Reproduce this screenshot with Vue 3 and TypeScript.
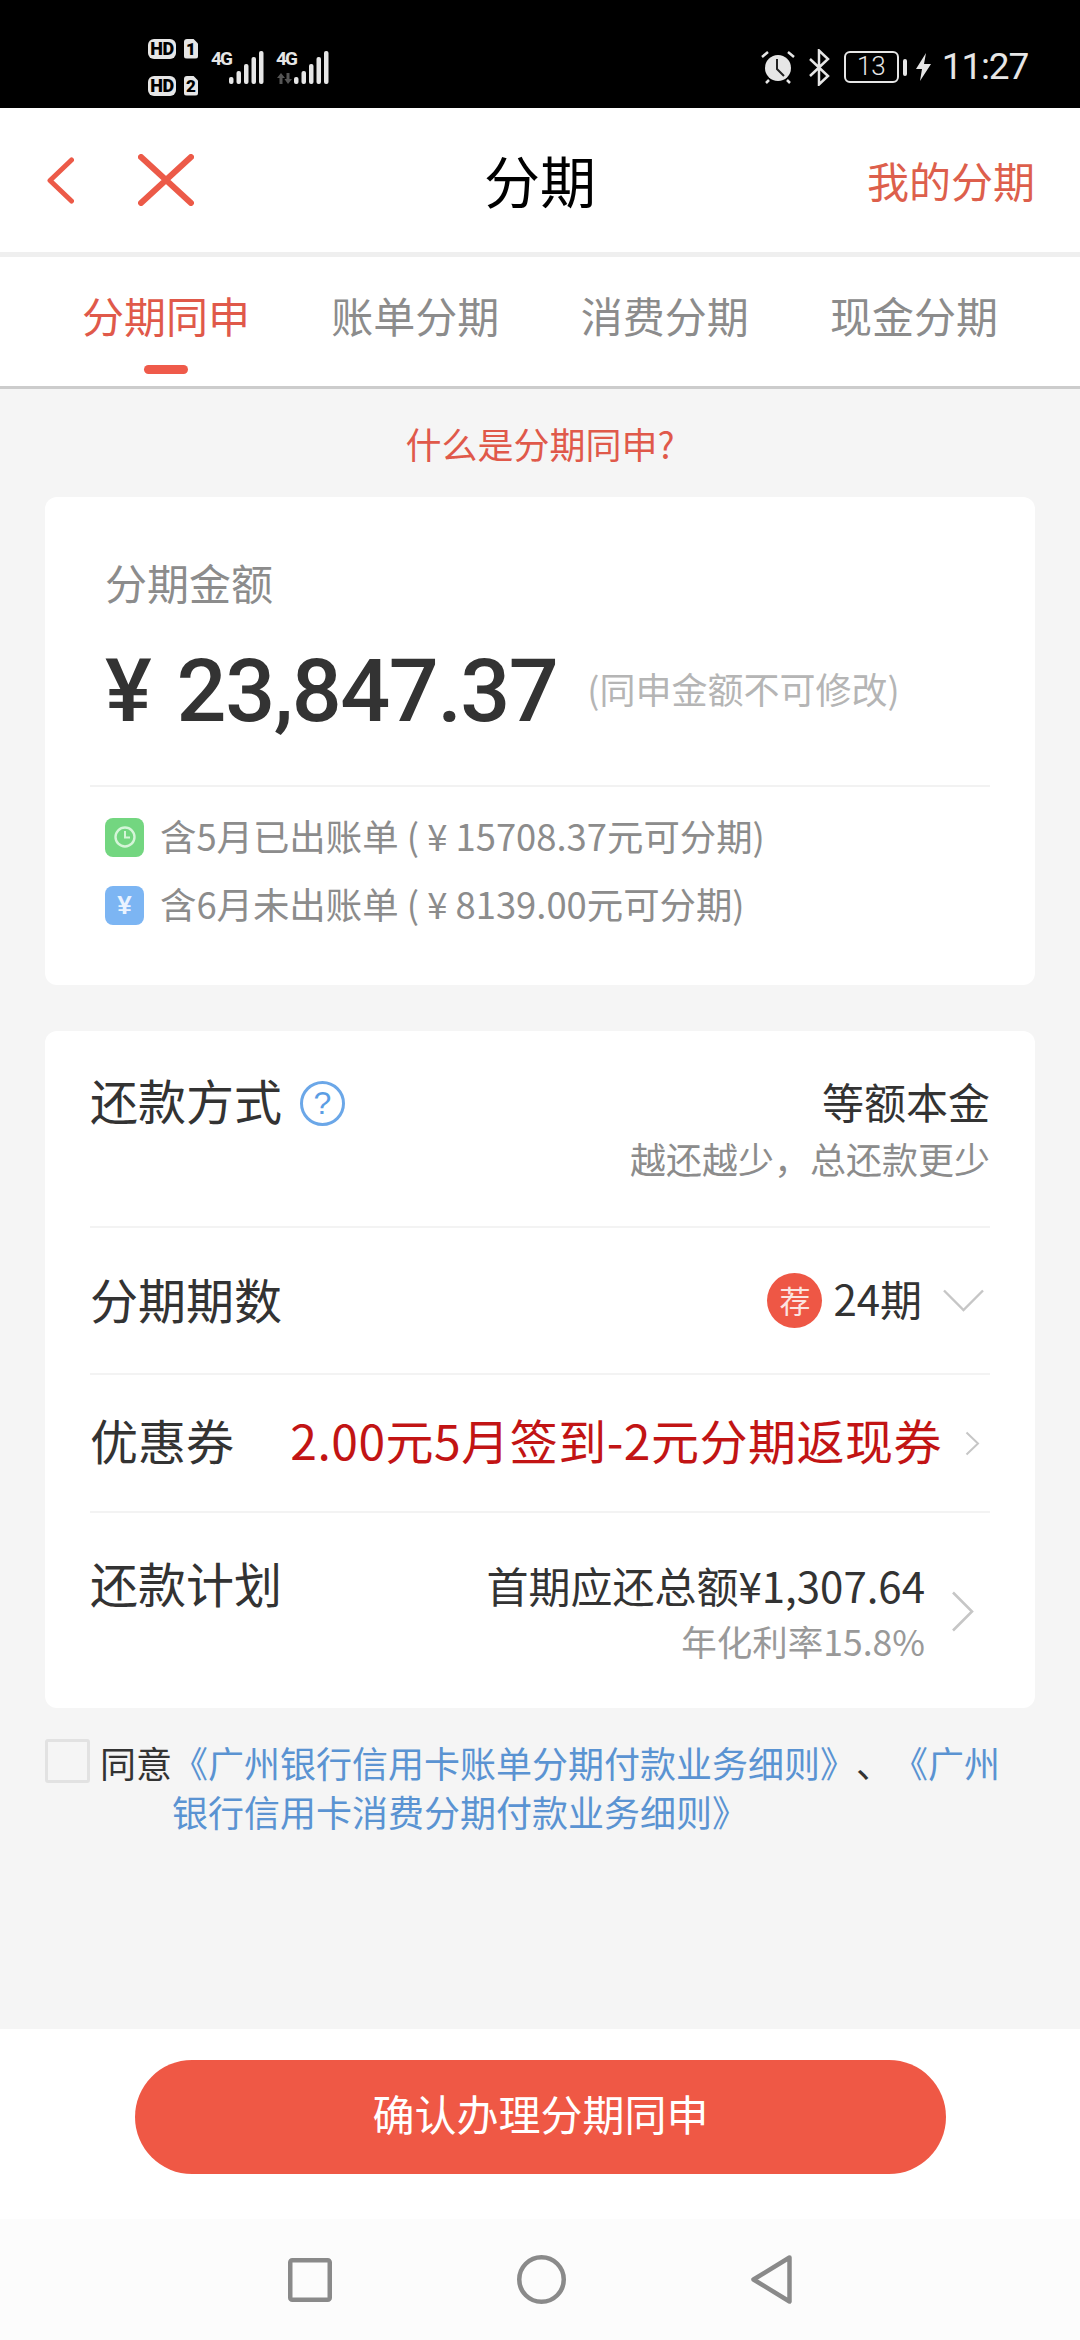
<script setup lang="ts">
const tabs = ['分期同申', '账单分期', '消费分期', '现金分期']
const bars = [
  { x: 0, h: 7 },
  { x: 7.5, h: 13 },
  { x: 15, h: 20 },
  { x: 22.5, h: 27 },
  { x: 30, h: 33 },
]
</script>

<template>
  <div class="page">
    <div class="status">
      <div class="status-left">
        <div class="sims">
          <div class="sim"><span class="hd">HD</span><span class="num">1</span></div>
          <div class="sim"><span class="hd">HD</span><span class="num">2</span></div>
        </div>
        <div class="net" v-for="n in 2" :key="n">
          <div class="net-type">
            <span class="g4">4G</span>
            <svg v-if="n === 2" width="17" height="11" viewBox="0 0 17 11" fill="#555">
              <path d="M5 0l4 5H6.500v6h-3V5H1zM12 11L8.500 6H10.500V0h3v6H16z" />
            </svg>
          </div>
          <svg width="35" height="33" viewBox="0 0 35 33" fill="#e6e6e6">
            <rect v-for="b in bars" :key="b.x" :x="b.x" :y="33 - b.h" width="4.500" :height="b.h" rx="2" />
          </svg>
        </div>
      </div>
      <div class="status-right">
        <svg class="alarm" width="34" height="34" viewBox="0 0 34 34">
          <circle cx="17" cy="18" r="13" fill="#e6e6e6" />
          <path d="M16 9v10l7 7" fill="none" stroke="#222" stroke-width="2" />
          <path d="M1 7l6-5M33 7l-6-5M5 33l3-3M29 33l-3-3" stroke="#e6e6e6" stroke-width="2.500" />
        </svg>
        <svg class="bt" width="22" height="37" viewBox="0 0 22 37" fill="none" stroke="#e6e6e6" stroke-width="2.500">
          <path d="M2 10l18 17-9 8.500V1.500l9 8.500L2 27" />
        </svg>
        <div class="batt">13</div>
        <span class="batt-tip"></span>
        <svg class="bolt" width="15" height="28" viewBox="0 0 15 28" fill="#e6e6e6"><path d="M10 0L0 16h6l-2 12 11-17H8z" /></svg>
        <span class="clock">11:27</span>
      </div>
    </div>

    <header class="nav">
      <div class="nav-icons">
        <svg width="27" height="47" viewBox="0 0 27 47" fill="none" stroke="#ec5a48" stroke-width="5" stroke-linecap="round" stroke-linejoin="round">
          <path d="M24.500 3L3 23.500 24.500 44" />
        </svg>
        <svg width="56" height="52" viewBox="0 0 56 52" fill="none" stroke="#ec5a48" stroke-width="6" stroke-linecap="round">
          <path d="M3 3l50 46M53 3L3 49" />
        </svg>
      </div>
      <div class="nav-title">分期</div>
      <div class="nav-mine">我的分期</div>
    </header>
    <div class="nav-gap"></div>

    <div class="tabs">
      <div v-for="(t, i) in tabs" :key="t" class="tab" :class="{ on: i === 0 }">
        {{ t }}
        <i v-if="i === 0"></i>
      </div>
    </div>

    <main class="body">
      <div class="what">什么是分期同申?</div>

      <section class="card amount">
        <div class="amt-label">分期金额</div>
        <div class="amt-row">
          <span class="amt-num">¥ 23,847.37</span>
          <span class="amt-note">(同申金额不可修改)</span>
        </div>
        <div class="bills">
          <div class="bill">
            <span class="badge green">
              <svg width="26" height="26" viewBox="0 0 26 26" fill="none" stroke="#d5f5d8" stroke-width="2.400">
                <circle cx="13" cy="13" r="9.500" />
                <path d="M13 7v6.500h5" stroke-width="2" />
              </svg>
            </span>
            <span class="bill-text">含5月已出账单 ( ¥ 15708.37元可分期)</span>
          </div>
          <div class="bill">
            <span class="badge blue">¥</span>
            <span class="bill-text">含6月未出账单 ( ¥ 8139.00元可分期)</span>
          </div>
        </div>
      </section>

      <section class="card form">
        <div class="row repay">
          <div class="row-label">
            还款方式
            <span class="help">?</span>
          </div>
          <div class="repay-right">
            <div class="val">等额本金</div>
            <div class="sub">越还越少，总还款更少</div>
          </div>
        </div>
        <div class="row terms">
          <div class="row-label">分期期数</div>
          <div class="terms-right">
            <span class="rec">荐</span>
            <span class="val">24期</span>
            <svg width="41" height="23" viewBox="0 0 41 23" fill="none" stroke="#c6c6c6" stroke-width="2.400">
              <path d="M1 1.500l19.500 19.500L40 1.500" />
            </svg>
          </div>
        </div>
        <div class="row coupon">
          <div class="row-label">优惠券</div>
          <div class="coupon-right">
            <span class="coupon-text">2.00元5月签到-2元分期返现券</span>
            <svg width="15" height="25" viewBox="0 0 15 25" fill="none" stroke="#c6c6c6" stroke-width="2">
              <path d="M1.500 1.500l11.500 11-11.500 11" />
            </svg>
          </div>
        </div>
        <div class="row plan">
          <div class="row-label">还款计划</div>
          <div class="plan-right">
            <div class="plan-text">
              <div class="plan-val">首期应还总额¥1,307.64</div>
              <div class="sub">年化利率15.8%</div>
            </div>
            <svg width="23" height="41" viewBox="0 0 23 41" fill="none" stroke="#c6c6c6" stroke-width="2.600">
              <path d="M2 1.500l19 19-19 19" />
            </svg>
          </div>
        </div>
      </section>

      <div class="agree">
        <span class="check"></span>
        <span class="agree-word">同意</span>
        <div class="agree-text">
          <a>《广州银行信用卡账单分期付款业务细则》</a><span class="dun">、</span><a>《广州</a><br /><a>银行信用卡消费分期付款业务细则》</a>
        </div>
      </div>
    </main>

    <div class="foot">
      <button class="confirm">确认办理分期同申</button>
    </div>

    <div class="sysnav">
      <svg width="44" height="44" viewBox="0 0 44 44" fill="none" stroke="#8a8a8a" stroke-width="4.500" stroke-linejoin="round"><rect x="2.250" y="2.250" width="39.500" height="39.500" rx="2" /></svg>
      <svg width="49" height="49" viewBox="0 0 49 49" fill="none" stroke="#8a8a8a" stroke-width="4.500"><circle cx="24.500" cy="24.500" r="22.250" /></svg>
      <svg width="41" height="49" viewBox="0 0 41 49" fill="none" stroke="#8a8a8a" stroke-width="4.500" stroke-linejoin="round"><path d="M38.500 2.500L2.500 24.500l36 22z" /></svg>
    </div>
  </div>
</template>

<style scoped>
.page {
  width: 1080px;
  height: 2340px;
  display: flex;
  flex-direction: column;
  background: #f5f5f5;
  font-family: "Noto Sans CJK SC", "Liberation Sans", sans-serif;
  overflow: hidden;
}
.status {
  height: 108px;
  flex: none;
  background: #000;
  color: #e6e6e6;
  display: flex;
  justify-content: space-between;
  align-items: center;
  padding: 26px 52px 0 148px;
  box-sizing: border-box;
}
.status-left { display: flex; align-items: center; gap: 12px; }
.sims { display: flex; flex-direction: column; gap: 17px; margin-right: 1px; }
.sim { display: flex; gap: 8px; align-items: center; }
.hd {
  width: 28px; height: 20px; border-radius: 6px; background: #e6e6e6; color: #000;
  font: 900 18px/20px "Roboto", sans-serif; letter-spacing: -0.500px; text-align: center;
}
.num {
  width: 14px; height: 20px; border-radius: 3px; background: #e6e6e6; color: #000;
  font: 900 17px/21px "Roboto", sans-serif; text-align: center;
  clip-path: polygon(0 0, 65% 0, 100% 25%, 100% 100%, 0 100%);
}
.net { display: flex; height: 33px; }
.net-type { width: 18px; display: flex; flex-direction: column; justify-content: space-between; align-items: flex-start; }
.g4 { font: 700 19px/15px "Roboto", sans-serif; letter-spacing: -2px; }
.status-right { display: flex; align-items: center; }
.bt { margin-left: 13px; }
.batt {
  width: 55px; height: 32px; box-sizing: border-box; border: 2.500px solid #e6e6e6; border-radius: 6px; margin-left: 14px;
  font: 300 26px/27px "Roboto", sans-serif; text-align: center;
}
.batt-tip { width: 4px; height: 17px; background: #e6e6e6; border-radius: 2px; margin-left: 4px; }
.bolt { margin-left: 9px; }
.clock { font: 400 37px/40px "Roboto", sans-serif; letter-spacing: -1.200px; margin-left: 11px; }

.nav {
  height: 144px;
  flex: none;
  background: #fff;
  display: flex;
  align-items: center;
  justify-content: space-between;
  padding: 0 45px 0 47px;
  position: relative;
}
.nav-icons { display: flex; align-items: center; gap: 64px; }
.nav-title {
  position: absolute; left: 0; right: 0; text-align: center;
  font-size: 56px; line-height: 60px; color: #000; margin-top: -3px;
}
.nav-mine { font-size: 42px; line-height: 50px; color: #dd5f4c; }
.nav-gap { height: 5px; flex: none; background: #efefef; }

.tabs {
  height: 132px;
  flex: none;
  box-sizing: border-box;
  display: flex;
  justify-content: space-between;
  padding: 0 82px;
  background: #fff;
  border-bottom: 3px solid #cccccc;
}
.tab {
  position: relative;
  font-size: 42px;
  line-height: 60px;
  padding-top: 28px;
  color: #8c8c8c;
}
.tab.on { color: #e0594a; }
.tab i {
  position: absolute; left: 62px; bottom: 12px;
  width: 44px; height: 9px; background: #ef5a4a; border-radius: 5px;
}

.body { flex: 1; padding: 0 45px; min-height: 0; }
.what { text-align: center; color: #e0594a; font-size: 36px; line-height: 48px; padding-top: 30px; height: 108px; box-sizing: border-box; }
.card { background: #fff; border-radius: 12px; }
.amount { height: 488px; box-sizing: border-box; padding: 56px 45px 0; margin-bottom: 46px; }
.amt-label { color: #8c8c8c; font-size: 42px; line-height: 58px; padding-left: 15px; }
.amt-row { display: flex; align-items: center; margin-top: 35px; padding-left: 15px; height: 90px; }
.amt-num { font: 500 88px/90px "Roboto", "Liberation Sans", sans-serif; letter-spacing: -1.500px; word-spacing: 6px; color: #333; }
.amt-note { color: #b5b5b5; font-size: 36px; margin: 0 0 6px 30px; }
.bills { border-top: 2px solid #f2f2f2; margin-top: 49px; padding-top: 16px; }
.bill { display: flex; align-items: center; gap: 16px; color: #8c8c8c; font-size: 36.400px; line-height: 68px; height: 68px; padding-left: 15px; }
.bill-text { margin-bottom: 5px; }
.badge { width: 39px; height: 39px; border-radius: 8px; display: flex; align-items: center; justify-content: center; }
.green { background: #73d680; }
.blue { background: #7cb5f3; color: #eaf3ff; font: 700 26px "Liberation Sans", sans-serif; }

.form { padding: 0 45px; margin-bottom: 30px; }
.row { display: flex; justify-content: space-between; border-bottom: 2px solid #f3f3f3; box-sizing: border-box; }
.row:last-child { border-bottom: 0; }
.repay { height: 197px; padding-top: 38px; }
.terms { height: 147px; align-items: center; }
.coupon { height: 138px; align-items: center; }
.plan { height: 195px; padding-top: 39px; }
.row-label { font-size: 48px; line-height: 60px; color: #333; display: flex; align-items: flex-start; }
.terms .row-label, .terms .val { margin-bottom: 6px; }
.coupon .row-label, .coupon-text { margin-bottom: 9px; }
.help {
  width: 45px; height: 45px; border: 3px solid #6ba7e8; border-radius: 50%; box-sizing: border-box;
  color: #5b9de4; font: 400 32px/39px "Liberation Sans", sans-serif; text-align: center; margin: 12px 0 0 18px;
}
.repay-right { text-align: right; padding-top: 4px; }
.val { font-size: 42px; line-height: 56px; color: #333; }
.sub { font-size: 36px; line-height: 50px; color: #8c8c8c; }
.repay-right .sub { margin-top: 4px; }
.terms-right { display: flex; align-items: center; }
.rec {
  width: 55px; height: 55px; border-radius: 50%; background: #ee5745; color: #fbe4e0;
  font-size: 31px; line-height: 53px; text-align: center; margin-right: 11px;
}
.terms-right svg { margin: 0 6px 0 21px; }
.coupon-right { display: flex; align-items: center; }
.coupon-text { color: #c21414; font-size: 48px; line-height: 60px; letter-spacing: 0.500px; }
.coupon-right svg { margin: 0 10px 0 23px; }
.plan-right { display: flex; align-items: center; align-self: flex-start; margin-top: 4px; }
.plan-text { text-align: right; }
.plan-val { font-size: 42px; line-height: 58px; color: #333; }
.plan-text .sub { margin-top: 2px; color: #999; font-size: 35.500px; }
.plan-right svg { margin: 0 16px 0 26px; }

.agree { display: flex; align-items: flex-start; font-size: 36px; line-height: 49px; text-spacing-trim: space-all; }
.check { width: 45px; height: 44px; flex: none; border: 3px solid #e2e2e2; border-radius: 3px; box-sizing: border-box; margin: 1px 10px 0 0; }
.agree-word { color: #333; flex: none; }
.agree-text { color: #5a93d2; margin-right: 6px; }
.dun { color: #333; }

.foot { height: 190px; flex: none; background: #fff; padding: 31px 134px 0 135px; box-sizing: border-box; }
.confirm {
  width: 100%; height: 114px; border: 0; border-radius: 57px; background: #ef5845; color: #fff;
  font-family: inherit; font-size: 42px; padding: 0 0 10px;
}
.sysnav {
  height: 121px; flex: none; background: #fcfcfc; display: flex; align-items: center; justify-content: center; gap: 185px;
}
</style>

<style>
html, body { margin: 0; background: #f5f5f5; }
</style>
